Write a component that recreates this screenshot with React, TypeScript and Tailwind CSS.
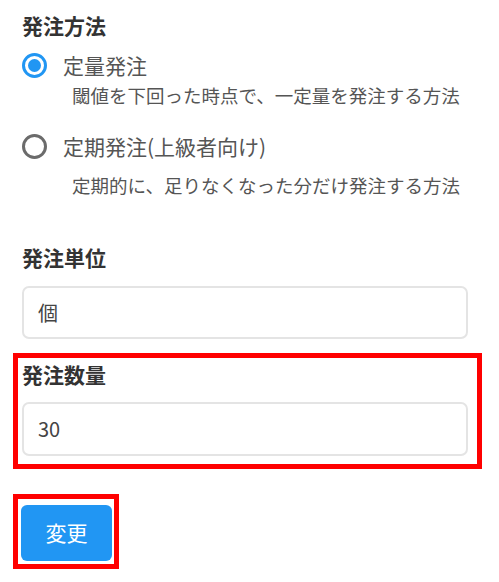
import React from "react";

const font = { fontFamily: '"Noto Sans CJK JP", "Noto Sans", sans-serif' };

function Radio({ checked }: { checked: boolean }) {
  return checked ? (
    <span className="flex h-[25px] w-[25px] shrink-0 items-center justify-center rounded-full border-[3px] border-[#2196f3] bg-white">
      <span className="h-[13px] w-[13px] rounded-full bg-[#2196f3]" />
    </span>
  ) : (
    <span className="h-[25px] w-[25px] shrink-0 rounded-full border-[3px] border-[#6b6b6b] bg-white" />
  );
}

export default function App() {
  return (
    <div className="min-h-[582px] w-[499px] bg-white pl-[22px] text-[#555]" style={font}>
      <div className="pt-[10px] text-[21px] font-bold leading-[30px] text-[#333]">発注方法</div>

      <div className="mt-[10px] flex h-[30px] items-center gap-[16px]">
        <Radio checked />
        <span className="text-[21px] leading-[30px] text-[#555]">定量発注</span>
      </div>
      <div className="mt-[2px] pl-[50px] text-[18.5px] leading-[26px] text-[#555]">
        閾値を下回った時点で、一定量を発注する方法
      </div>

      <div className="mt-[23px] flex h-[30px] items-center gap-[16px]">
        <Radio checked={false} />
        <span className="text-[21px] leading-[30px] text-[#555]">定期発注(上級者向け)</span>
      </div>
      <div className="mt-[11px] pl-[50px] text-[18.5px] leading-[26px] text-[#555]">
        定期的に、足りなくなった分だけ発注する方法
      </div>

      <div className="mt-[44px] text-[21px] font-bold leading-[30px] text-[#333]">発注単位</div>
      <div className="mt-[14px] flex h-[53px] w-[446px] items-center rounded-[7px] border-2 border-[#e4e4e4] pl-[14px] text-[20px] text-[#444]">
        個
      </div>

      <div className="ml-[-9px] mt-[14px] w-[469px] border-[5px] border-[#ff0000] pb-[8px] pl-[4px] pt-[2px]">
        <div className="text-[21px] font-bold leading-[28px] text-[#333]">発注数量</div>
        <div className="mt-[14px] flex h-[54px] w-[446px] items-center rounded-[7px] border-2 border-[#e4e4e4] pl-[14px] text-[20px] text-[#444]">
          30
        </div>
      </div>

      <div className="ml-[-9px] mt-[25px] w-[106px] border-[5px] border-[#ff0000] pb-[3px] pl-[3px] pt-[6px]">
        <button className="flex h-[56px] w-[91px] items-center justify-center rounded-[6px] bg-[#2196f3] text-[21px] text-white">
          変更
        </button>
      </div>
    </div>
  );
}
